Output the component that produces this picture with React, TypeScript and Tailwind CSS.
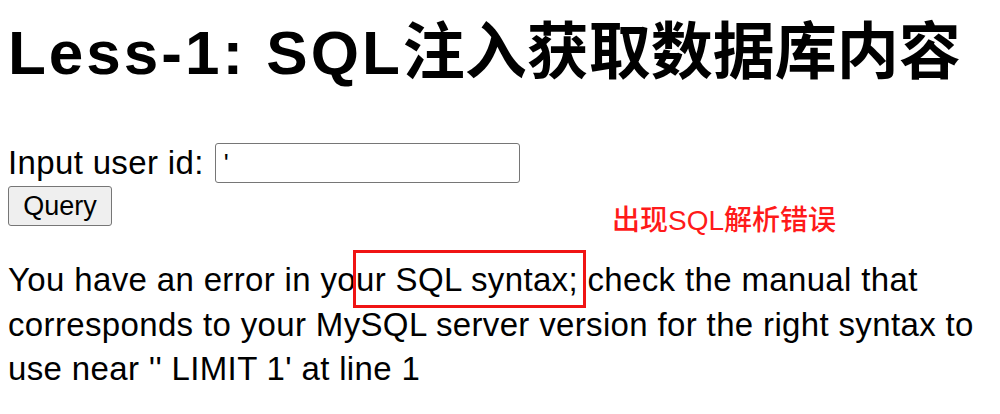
import React from "react";

export default function App() {
  return (
    <div className="relative min-h-[414px] w-[1000px] bg-white px-[8px] text-black font-['Liberation_Sans','Noto_Sans_CJK_SC',sans-serif]">
      <h1 className="m-0 pt-[21px] text-[62px] font-bold leading-[64px]">
        <span className="tracking-[3px]">Less-1: SQL</span>
        <span>注入获取数据库内容</span>
      </h1>

      <form className="mt-[57px]">
        <div className="flex items-center h-[42px]">
          <span className="text-[33px] leading-[42px] tracking-[0.35px]">
            Input user id:
          </span>
          <input
            readOnly
            value="'"
            className="ml-[11px] h-[40px] w-[305px] rounded-[3px] border border-[#767676] px-[8px] text-[26px] leading-[38px] font-['Liberation_Sans',sans-serif] outline-none"
          />
        </div>
        <button
          type="button"
          className="mt-[2px] h-[40px] w-[104px] rounded-[3px] border border-[#767676] bg-[#efefef] text-[27px] leading-[38px] font-['Liberation_Sans',sans-serif]"
        >
          Query
        </button>
      </form>

      <p className="m-0 mt-[32px] w-[984px] text-[33px] leading-[44.5px] tracking-[0.35px]">
        You have an error in your SQL syntax; check the manual that corresponds
        to your MySQL server version for the right syntax to use near '' LIMIT
        1' at line 1
      </p>

      <div className="absolute left-[612px] top-[204px] text-[28px] font-medium leading-[34px] text-[#ff1a1a]">
        出现SQL解析错误
      </div>
      <div className="absolute left-[353px] top-[250px] h-[58px] w-[233px] border-[3px] border-[#f01414]" />
    </div>
  );
}
